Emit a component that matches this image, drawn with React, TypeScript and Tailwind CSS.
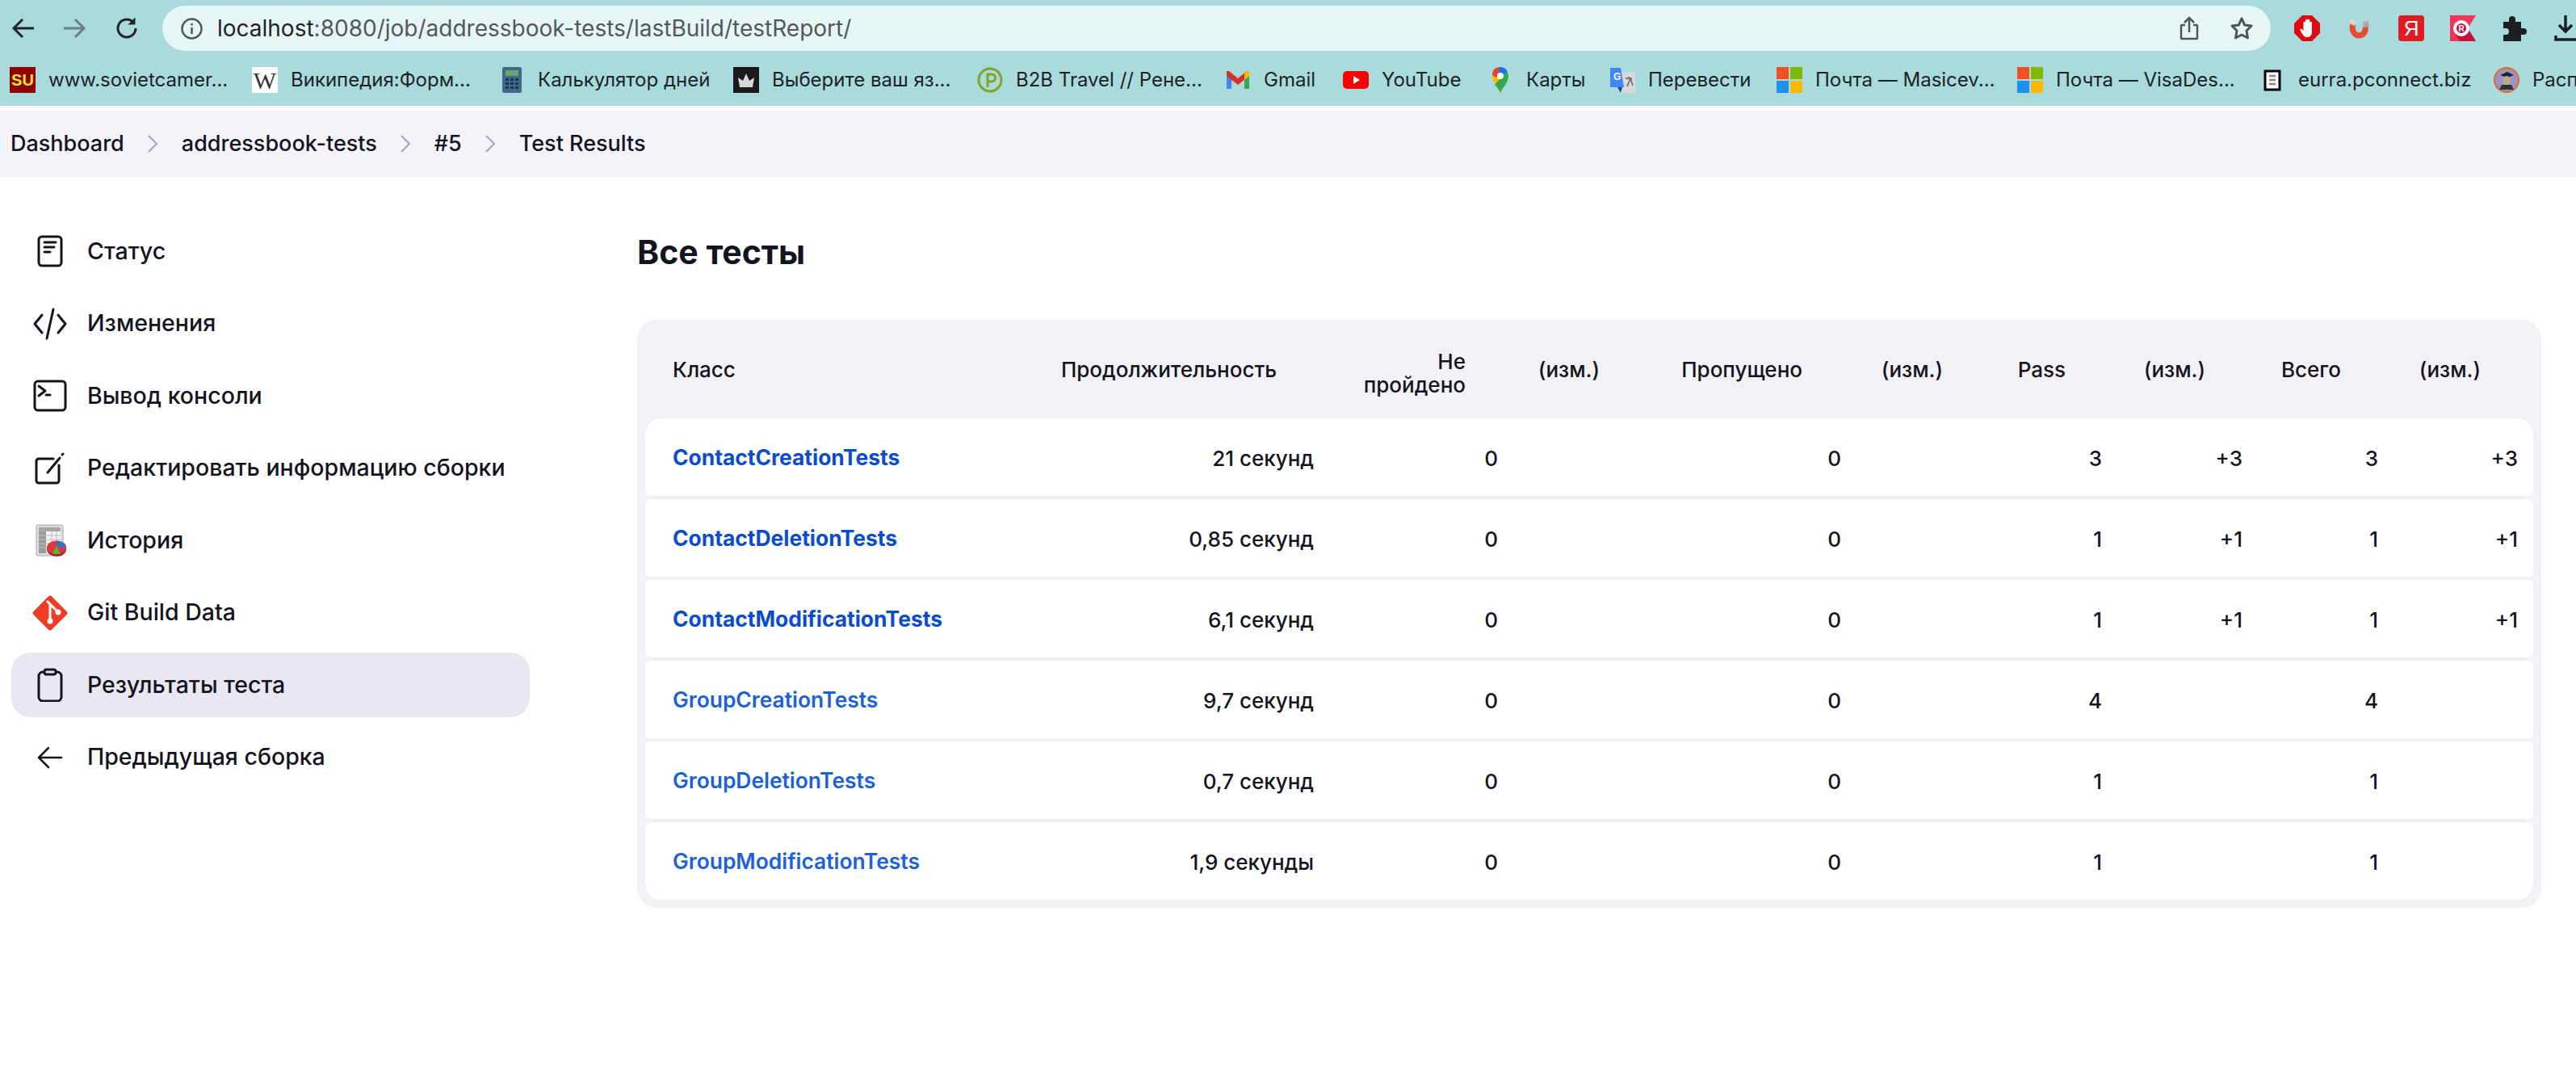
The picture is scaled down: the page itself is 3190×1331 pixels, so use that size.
import { ReactNode } from "react";

const tableCols =
  "grid grid-cols-[485px_362px_227px_173px_253px_172px_149px_176px_167px_174px]";

const bookmarks: { icon: ReactNode; label: string; width: string }[] = [
  { icon: <SuIcon />, label: "www.sovietcamer...", width: "w-[267px]" },
  { icon: <WikiIcon />, label: "Википедия:Форм...", width: "w-[273px]" },
  { icon: <CalcIcon />, label: "Калькулятор дней", width: "w-[257px]" },
  { icon: <CrownIcon />, label: "Выберите ваш яз...", width: "w-[269px]" },
  { icon: <PIcon />, label: "B2B Travel // Рене...", width: "w-[274px]" },
  { icon: <GmailIcon />, label: "Gmail", width: "w-[113px]" },
  { icon: <YoutubeIcon />, label: "YouTube", width: "w-[146px]" },
  { icon: <MapsIcon />, label: "Карты", width: "w-[118px]" },
  { icon: <TranslateIcon />, label: "Перевести", width: "w-[174px]" },
  { icon: <MsIcon />, label: "Почта — Masicev...", width: "w-[265px]" },
  { icon: <MsIcon />, label: "Почта — VisaDes...", width: "w-[267px]" },
  { icon: <DocIcon />, label: "eurra.pconnect.biz", width: "w-[257px]" },
  { icon: <AvatarIcon />, label: "Расписание", width: "w-[200px]" },
];

const navItems: { icon: ReactNode; label: string; active?: boolean }[] = [
  { icon: <StatusIcon />, label: "Статус" },
  { icon: <CodeIcon />, label: "Изменения" },
  { icon: <TerminalIcon />, label: "Вывод консоли" },
  { icon: <EditIcon />, label: "Редактировать информацию сборки" },
  { icon: <HistoryIcon />, label: "История" },
  { icon: <GitIcon />, label: "Git Build Data" },
  { icon: <ClipboardIcon />, label: "Результаты теста", active: true },
  { icon: <BackIcon />, label: "Предыдущая сборка" },
];

const rows = [
  { name: "ContactCreationTests", time: "21 секунд", pass: "3", diff: "+3", bold: true },
  { name: "ContactDeletionTests", time: "0,85 секунд", pass: "1", diff: "+1", bold: true },
  { name: "ContactModificationTests", time: "6,1 секунд", pass: "1", diff: "+1", bold: true },
  { name: "GroupCreationTests", time: "9,7 секунд", pass: "4", diff: "", bold: false },
  { name: "GroupDeletionTests", time: "0,7 секунд", pass: "1", diff: "", bold: false },
  { name: "GroupModificationTests", time: "1,9 секунды", pass: "1", diff: "", bold: false },
];

function SuIcon() {
  return (
    <div className="w-[32px] h-[32px] bg-[#8f0000] flex items-center justify-center text-[#f5e72a] text-[20px] font-bold font-['Liberation_Sans',sans-serif]">
      SU
    </div>
  );
}

function WikiIcon() {
  return (
    <div className="w-[32px] h-[32px] bg-white flex items-center justify-center text-[#333] text-[30px] font-['Liberation_Serif',serif]">
      W
    </div>
  );
}

function CalcIcon() {
  return (
    <svg width="32" height="32" viewBox="0 0 32 32">
      <rect x="4" y="0" width="24" height="32" rx="2" fill="#3f6a8c" />
      <rect x="8" y="4" width="16" height="7" fill="#6fa36b" />
      {[14, 19, 24].map((y) =>
        [8, 14, 20].map((x) => <rect key={`${x}-${y}`} x={x} y={y} width="4" height="3" fill="#1d3550" />)
      )}
    </svg>
  );
}

function CrownIcon() {
  return (
    <svg width="32" height="32" viewBox="0 0 32 32">
      <rect width="32" height="32" fill="#1a1a1a" />
      <path d="M8 25 L6 13 L12 17 L16 8 L20 17 L26 13 L24 25 Z" fill="#d8d8d8" />
    </svg>
  );
}

function PIcon() {
  return (
    <svg width="32" height="32" viewBox="0 0 32 32">
      <circle cx="16" cy="16" r="14" fill="none" stroke="#83a22a" strokeWidth="3" />
      <path d="M13 25V9h5a4.500 4.500 0 0 1 0 9h-5" fill="none" stroke="#83a22a" strokeWidth="3" />
    </svg>
  );
}

function GmailIcon() {
  return (
    <svg width="32" height="32" viewBox="0 0 32 32">
      <path d="M2 9v18h6V14z" fill="#4285f4" />
      <path d="M24 14v13h6V9z" fill="#34a853" />
      <path d="M2 5v6l14 11 14-11V5l-3-0-11 9L5 5z" fill="#d93025" />
      <path d="M24 8l3-3 3 0v6l-6 5z" fill="#fbbc04" />
    </svg>
  );
}

function YoutubeIcon() {
  return (
    <svg width="32" height="32" viewBox="0 0 32 32">
      <rect x="0" y="5" width="32" height="22" rx="5" fill="#ff0000" />
      <path d="M13 11l8 5-8 5z" fill="#fff" />
    </svg>
  );
}

function MapsIcon() {
  return (
    <svg width="32" height="32" viewBox="0 0 32 32">
      <path d="M16 32c-2-6-10-12-10-21a10 10 0 0 1 10-11z" fill="#fbbc04" />
      <path d="M16 32c2-6 10-12 10-21 0-2-1-4-2-6L9 22c3 3 5.500 6 7 10z" fill="#34a853" />
      <path d="M9 2a11 11 0 0 0-3 8l5 3 8-10-3-3c-3 0-5 1-7 2z" fill="#ea4335" />
      <path d="M16 0c4 0 7 2 8.500 5L19 11 13 4z" fill="#1a73e8" />
      <circle cx="16" cy="11" r="4" fill="#fff" />
    </svg>
  );
}

function TranslateIcon() {
  return (
    <svg width="32" height="32" viewBox="0 0 32 32">
      <rect x="14" y="6" width="18" height="26" rx="1" fill="#d9d9d9" />
      <path d="M20 14h8M24 12v2M22 24l4-10M26 14l3 9" stroke="#666" fill="none" strokeWidth="1.500" />
      <path d="M1 1h13l4 24H1z" fill="#4285f4" />
      <path d="M16 25l-2 7-4-7z" fill="#2a3f9c" />
      <text x="5" y="16" fontSize="12" fontWeight="700" fill="#fff" fontFamily="Liberation Sans, sans-serif">G</text>
    </svg>
  );
}

function MsIcon() {
  return (
    <div className="w-[32px] h-[32px] grid grid-cols-2 gap-[2px]">
      <div className="bg-[#f25022]" />
      <div className="bg-[#7fba00]" />
      <div className="bg-[#1e90f0]" />
      <div className="bg-[#ffb900]" />
    </div>
  );
}

function DocIcon() {
  return (
    <svg width="32" height="32" viewBox="0 0 32 32">
      <rect x="7" y="5" width="18" height="23" fill="#fff" stroke="#000" strokeWidth="3" />
      <path d="M12 11h8M12 16h8M12 21h8" stroke="#888" strokeWidth="2.500" />
    </svg>
  );
}

function AvatarIcon() {
  return (
    <svg width="32" height="32" viewBox="0 0 32 32">
      <circle cx="16" cy="16" r="15" fill="#9a94c4" stroke="#e0662a" strokeWidth="2" />
      <path d="M8 10l9-4 8 4-8 3z" fill="#222" />
      <ellipse cx="16" cy="17" rx="5" ry="6" fill="#b8a890" />
      <path d="M7 28l3-6h12l3 6z" fill="#333" />
    </svg>
  );
}

function StatusIcon() {
  return (
    <svg width="32" height="40" viewBox="0 0 32 40" fill="none" stroke="#14141f" strokeWidth="3" strokeLinecap="round">
      <rect x="2" y="2" width="28" height="36" rx="4" />
      <path d="M9 9h14M9 15h12M9 21h7" />
    </svg>
  );
}

function CodeIcon() {
  return (
    <svg width="42" height="40" viewBox="0 0 42 40" fill="none" stroke="#14141f" strokeWidth="3" strokeLinecap="round" strokeLinejoin="round">
      <path d="M11 9L2 20l9 11M31 9l9 11-9 11M25 2l-8 36" />
    </svg>
  );
}

function TerminalIcon() {
  return (
    <svg width="42" height="40" viewBox="0 0 42 40" fill="none" stroke="#14141f" strokeWidth="3" strokeLinecap="round" strokeLinejoin="round">
      <rect x="2" y="2" width="38" height="36" rx="4" />
      <path d="M7 8l8 6-8 6M16 19h5" />
    </svg>
  );
}

function EditIcon() {
  return (
    <svg width="40" height="40" viewBox="0 0 40 40" fill="none" stroke="#14141f" strokeWidth="3" strokeLinecap="round" strokeLinejoin="round">
      <path d="M24 8H6a3 3 0 0 0-3 3v24a3 3 0 0 0 3 3h22a3 3 0 0 0 3-3V16" />
      <path d="M17 25L32 7" />
      <path d="M35 3l1-1" />
    </svg>
  );
}

function HistoryIcon() {
  return (
    <svg width="40" height="42" viewBox="0 0 40 42">
      <rect x="3" y="2" width="33" height="38" rx="1.500" fill="#dedede" stroke="#a8a8a8" />
      <rect x="6" y="5" width="27" height="32" fill="#f4f4f4" />
      <rect x="6" y="5" width="9" height="32" fill="#9c9c9c" />
      <rect x="6" y="5" width="27" height="5" fill="#a8a8a8" />
      <path d="M6 15h27M6 20h27M6 25h27M6 30h27M22 10v27M28 10v27" stroke="#bdbdbd" />
      <ellipse cx="28" cy="32" rx="12" ry="9" fill="#a81f28" />
      <ellipse cx="28" cy="30" rx="12" ry="8.500" fill="#dc3a3f" />
      <path d="M28 30l0-8.500a12 8.500 0 0 1 12 8.500z" fill="#3f6fb8" />
      <path d="M28 28l-5 10h10z" fill="#5cb52f" />
    </svg>
  );
}

function GitIcon() {
  return (
    <svg width="46" height="46" viewBox="0 0 46 46">
      <rect x="7" y="7" width="32" height="32" rx="3" transform="rotate(45 23 23)" fill="#f03c24" />
      <path d="M19 8l14 14M23 13v19" stroke="#fff" strokeWidth="3" fill="none" />
      <circle cx="23" cy="33" r="3.500" fill="#fff" />
      <circle cx="33" cy="22" r="3.500" fill="#fff" />
    </svg>
  );
}

function ClipboardIcon() {
  return (
    <svg width="32" height="42" viewBox="0 0 32 42" fill="none" stroke="#14141f" strokeWidth="3" strokeLinejoin="round">
      <rect x="2" y="5" width="28" height="36" rx="5" />
      <rect x="9" y="2" width="14" height="6" rx="2.500" fill="#e8e7f2" />
    </svg>
  );
}

function BackIcon() {
  return (
    <svg width="32" height="28" viewBox="0 0 32 28" fill="none" stroke="#14141f" strokeWidth="2.500" strokeLinecap="round" strokeLinejoin="round">
      <path d="M2 14h28M14 2L2 14l12 12" />
    </svg>
  );
}

function ToolbarArrow({ flip, color }: { flip?: boolean; color: string }) {
  return (
    <svg width="28" height="26" viewBox="0 0 28 26" fill="none" stroke={color} strokeWidth="3" className={flip ? "rotate-180" : ""}>
      <path d="M28 13H3M14 2L3 13l11 11" />
    </svg>
  );
}

function Chevron() {
  return (
    <svg width="13" height="22" viewBox="0 0 13 22" fill="none" stroke="#a3a3b5" strokeWidth="2">
      <path d="M1 1l10 10L1 21" />
    </svg>
  );
}

export default function App() {
  return (
    <div className="w-[3190px] h-[1331px] overflow-hidden bg-white font-['Inter',sans-serif] text-[#14141f]">
      {/* Browser chrome */}
      <div className="h-[131px] bg-[#a9dbdc] overflow-hidden">
        <div className="h-[70px] flex items-center pl-[14px]">
          <ToolbarArrow color="#1d2528" />
          <div className="ml-[37px]">
            <ToolbarArrow flip color="#6d7f82" />
          </div>
          <svg width="28" height="28" viewBox="0 0 28 28" fill="none" stroke="#1d2528" strokeWidth="3" className="ml-[36px]">
            <path d="M25 14a11 11 0 1 1-4-8.500" />
            <path d="M24 1v8h-8" fill="#1d2528" strokeWidth="1" />
          </svg>
          <div className="ml-[30px] w-[2613px] h-[56px] rounded-full bg-[#e6f6f6] flex items-center pl-[23px] pr-[20px]">
            <svg width="27" height="27" viewBox="0 0 27 27" fill="none" stroke="#4f5559" strokeWidth="2.500">
              <circle cx="13.500" cy="13.500" r="12" />
              <path d="M13.500 12v8M13.500 7v2.500" />
            </svg>
            <div className="ml-[18px] text-[28px] text-[#52585c] whitespace-nowrap">
              <span className="text-[#1d2528]">localhost</span>:8080/job/addressbook-tests/lastBuild/testReport/
            </div>
            <svg width="24" height="30" viewBox="0 0 24 30" fill="none" stroke="#4f5559" strokeWidth="2.500" className="ml-auto">
              <path d="M7 11H3a1 1 0 0 0-1 1v15a1 1 0 0 0 1 1h18a1 1 0 0 0 1-1V12a1 1 0 0 0-1-1h-4M12 20V2M6 8l6-6 6 6" />
            </svg>
            <svg width="32" height="32" viewBox="0 0 32 32" fill="none" stroke="#4f5559" strokeWidth="3" className="ml-[37px]">
              <path d="M16 4l3.700 8 8.300 1-6 6 1.500 9L16 24l-7.500 4 1.500-9-6-6 8.300-1z" strokeLinejoin="round" />
            </svg>
          </div>
          <div className="ml-[29px] flex items-center">
            <svg width="32" height="32" viewBox="0 0 32 32">
              <path d="M10 0h12l10 10v12L22 32H10L0 22V10z" fill="#e00912" />
              <path d="M7 17.500l2-1 2.500 2.500V9a1.300 1.300 0 0 1 2.600 0V6a1.300 1.300 0 0 1 2.600 0v0a1.300 1.300 0 0 1 2.600 0v3a1.300 1.300 0 0 1 2.600 0v12c0 4-2.500 6-6 6-3.500 0-5-2-8.900-9.500z" fill="#fff" />
            </svg>
            <svg width="28" height="28" viewBox="0 0 28 28" className="ml-[34px]" fill="none">
              <path d="M7 8C4 16 9 24 15 23c6-1 8-6 7-11" stroke="#e84a2e" strokeWidth="7" />
              <path d="M4 2l7 3-2 6-7-3z" fill="#d6d6d6" />
              <path d="M19 6l7-1 1 7-7 1z" fill="#a9a9a9" />
            </svg>
            <div className="ml-[35px] w-[32px] h-[32px] rounded-[4px] bg-[#e01b24] flex items-center justify-center text-white text-[26px] font-['Liberation_Sans',sans-serif]">
              Я
            </div>
            <svg width="32" height="32" viewBox="0 0 32 32" className="ml-[32px]">
              <path d="M0 0h32L22 16l10 16H0z" fill="#f0345a" />
              <path d="M7 24l15-8 10 16H12z" fill="#c4123a" />
              <circle cx="14" cy="16" r="10" fill="#fff" />
              <circle cx="14" cy="16" r="6" fill="#c4123a" />
              <text x="14" y="20" textAnchor="middle" fontSize="10" fontWeight="700" fill="#fff" fontFamily="Liberation Sans, sans-serif">R</text>
            </svg>
            <svg width="31" height="32" viewBox="0 0 31 32" className="ml-[32px]" fill="#1b1f22">
              <path d="M2 8h7V5a4 4 0 0 1 8 0v3h7v8h3a4 4 0 0 1 0 8h-3v8H2v-8h3a4 4 0 0 0 0-8H2z" />
            </svg>
            <svg width="27" height="34" viewBox="0 0 27 34" className="ml-[34px]" fill="none" stroke="#1b1f22" strokeWidth="3.500">
              <path d="M14 1v20M6 13l8 8 8-8M2 26v5h30" />
            </svg>
          </div>
        </div>
        <div className="h-[61px] pl-[12px] pt-[13px] flex gap-[33px] whitespace-nowrap">
          {bookmarks.map((b) => (
            <div key={b.label + b.width} className={`${b.width} flex flex-none items-center gap-[16px] h-[32px] text-[24px] text-[#1d2226]`}>
              <div className="flex-none w-[32px] h-[32px]">{b.icon}</div>
              <span>{b.label}</span>
            </div>
          ))}
        </div>
      </div>
      <div className="h-[6px] bg-white" />

      {/* Breadcrumb */}
      <div className="h-[82px] bg-[#f3f3f9] flex items-center pl-[13px] text-[27px] font-medium">
        <span>Dashboard</span>
        <div className="mx-[29px]"><Chevron /></div>
        <span>addressbook-tests</span>
        <div className="mx-[29px]"><Chevron /></div>
        <span>#5</span>
        <div className="mx-[29px]"><Chevron /></div>
        <span>Test Results</span>
      </div>

      <div className="flex">
        {/* Sidebar */}
        <div className="w-[789px] flex-none pl-[14px] pt-[52px]">
          <div className="w-[642px] flex flex-col gap-[9.5px]">
            {navItems.map((item) => (
              <div
                key={item.label}
                className={`h-[80px] rounded-[24px] pl-[24px] flex items-center gap-[22px] text-[28.5px] font-medium ${item.active ? "bg-[#e8e7f2]" : ""}`}
              >
                <div className="w-[48px] flex-none flex items-center justify-center">{item.icon}</div>
                <span>{item.label}</span>
              </div>
            ))}
          </div>
        </div>

        {/* Main */}
        <div className="flex-1 pt-[69px] pr-[44px]">
          <h1 className="text-[41px] leading-[48px] font-bold mb-[60px]">Все тесты</h1>
          <div className="rounded-[24px] bg-[#f1f1f6] px-[10px] pb-[10px] text-[26px] font-medium">
            <div className={`${tableCols} h-[122px] items-center text-right leading-[29px]`}>
              <div className="text-left pl-[34px]">Класс</div>
              <div className="pr-[65px]">Продолжительность</div>
              <div className="pr-[58px] pt-[10px]">Не<br />пройдено</div>
              <div className="pr-[65px]">(изм.)</div>
              <div className="pr-[67px]">Пропущено</div>
              <div className="pr-[65px]">(изм.)</div>
              <div className="pr-[62px]">Pass</div>
              <div className="pr-[65px]">(изм.)</div>
              <div className="pr-[64px]">Всего</div>
              <div className="pr-[65px]">(изм.)</div>
            </div>
            <div className="flex flex-col gap-[4px]">
              {rows.map((row, i) => (
                <div
                  key={row.name}
                  className={`${tableCols} h-[96px] pt-[2px] items-center text-right bg-white ${i === 0 ? "rounded-t-[20px] rounded-b-[6px]" : i === rows.length - 1 ? "rounded-b-[20px] rounded-t-[6px]" : "rounded-[6px]"}`}
                >
                  <div className={`text-left pl-[34px] whitespace-nowrap text-[26.4px] ${row.bold ? "font-bold text-[#0b4cce]" : "font-semibold text-[#1c62d6]"}`}>
                    {row.name}
                  </div>
                  <div className="pr-[19px]">{row.time}</div>
                  <div className="pr-[18px]">0</div>
                  <div className="pr-[19px]" />
                  <div className="pr-[19px]">0</div>
                  <div className="pr-[19px]" />
                  <div className="pr-[17px]">{row.pass}</div>
                  <div className="pr-[19px]">{row.diff}</div>
                  <div className="pr-[18px]">{row.pass}</div>
                  <div className="pr-[19px]">{row.diff}</div>
                </div>
              ))}
            </div>
          </div>
        </div>
      </div>
    </div>
  );
}
